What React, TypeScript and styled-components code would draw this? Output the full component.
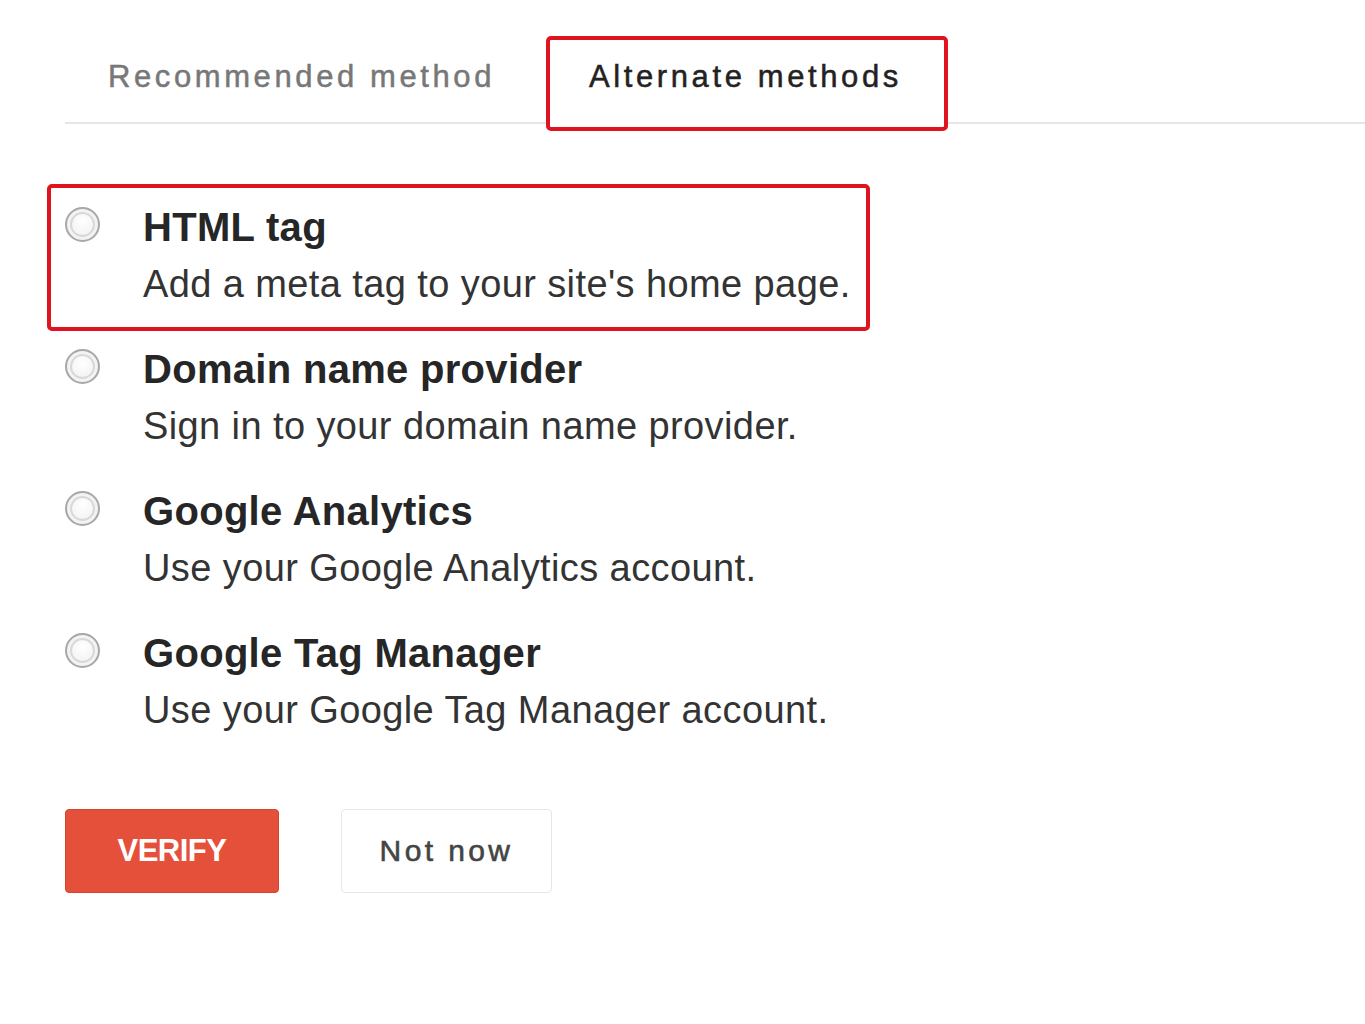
import React, { useState } from "react";
import styled, { createGlobalStyle } from "styled-components";

const GlobalStyle = createGlobalStyle`
  body {
    margin: 0;
    background: #fff;
    font-family: "Liberation Sans", Arial, sans-serif;
  }
`;

const annotationRed = "#e0141e";

const Page = styled.div`
  padding-top: 36px;
  width: 1365px;
  min-height: 1024px;
  box-sizing: border-box;
`;

const TabBar = styled.div`
  display: flex;
  align-items: flex-start;
  gap: 5px;
  height: 86px;
  margin-left: 65px;
  border-bottom: 2px solid #e6e6e6;
`;

const Tab = styled.div<{ active?: boolean; marked?: boolean }>`
  box-sizing: border-box;
  height: 95px;
  padding: 19px 42px 0 39px;
  border: 4px solid ${(p) => (p.marked ? annotationRed : "transparent")};
  border-radius: 5px;
  background: ${(p) => (p.active ? "#fff" : "transparent")};
  font-size: 31px;
  line-height: 36px;
  letter-spacing: 3.6px;
  color: ${(p) => (p.active ? "#222" : "#777")};
  -webkit-text-stroke: 0.5px ${(p) => (p.active ? "#222" : "#777")};
  white-space: nowrap;
  cursor: pointer;
`;

const OptionList = styled.div`
  margin: 60px 0 0 47px;
  width: 823px;
`;

const Option = styled.label<{ marked?: boolean }>`
  box-sizing: border-box;
  display: grid;
  grid-template-columns: 35px 1fr;
  column-gap: 43px;
  height: 147px;
  padding: 16px 14px 0;
  border: 4px solid ${(p) => (p.marked ? annotationRed : "transparent")};
  border-radius: 5px;
  cursor: pointer;

  & + & {
    margin-top: -5px;
  }
`;

const Radio = styled.span<{ checked?: boolean }>`
  box-sizing: border-box;
  width: 35px;
  height: 35px;
  margin-top: 3px;
  border-radius: 50%;
  border: 2px solid #a8a8a8;
  background: radial-gradient(circle at 50% 40%, #ffffff 0%, #f4f4f4 55%, #e2e2e2 100%);
  box-shadow: inset 0 0 0 3px #f3f3f3, inset 0 0 0 5px #d8d8d8;
  position: relative;

  &::after {
    content: "";
    display: ${(p) => (p.checked ? "block" : "none")};
    position: absolute;
    inset: 9px;
    border-radius: 50%;
    background: #333;
  }
`;

const OptionText = styled.div`
  display: flex;
  flex-direction: column;
  gap: 11px;
`;

const OptionTitle = styled.div`
  font-size: 40px;
  line-height: 46px;
  font-weight: bold;
  letter-spacing: 0.3px;
  color: #262626;
  white-space: nowrap;
`;

const OptionDesc = styled.div`
  font-size: 38px;
  line-height: 46px;
  letter-spacing: 0.4px;
  color: #333;
  white-space: nowrap;
`;

const ButtonRow = styled.div`
  display: flex;
  gap: 62px;
  margin: 52px 0 0 65px;
`;

const Button = styled.button<{ primary?: boolean }>`
  box-sizing: border-box;
  height: 84px;
  width: ${(p) => (p.primary ? "214px" : "211px")};
  border-radius: 4px;
  border: 1px solid ${(p) => (p.primary ? "#d8442f" : "#e6e6e6")};
  background: ${(p) => (p.primary ? "#e5503b" : "#fff")};
  color: ${(p) => (p.primary ? "#fff" : "#444")};
  font-family: "Liberation Sans", Arial, sans-serif;
  font-size: ${(p) => (p.primary ? "31px" : "30px")};
  font-weight: ${(p) => (p.primary ? "bold" : "normal")};
  letter-spacing: ${(p) => (p.primary ? "-0.5px" : "3.4px")};
  -webkit-text-stroke: ${(p) => (p.primary ? "0" : "0.6px #444")};
  padding: 0;
  cursor: pointer;
`;

const methods = [
  { id: "html", title: "HTML tag", desc: "Add a meta tag to your site's home page." },
  { id: "dns", title: "Domain name provider", desc: "Sign in to your domain name provider." },
  { id: "ga", title: "Google Analytics", desc: "Use your Google Analytics account." },
  { id: "gtm", title: "Google Tag Manager", desc: "Use your Google Tag Manager account." }
];

const App: React.FC = () => {
  const [tab, setTab] = useState("alternate");
  const [selected, setSelected] = useState<string | null>(null);

  return (
    <Page>
      <GlobalStyle />
      <TabBar>
        <Tab active={tab === "recommended"} onClick={() => setTab("recommended")}>
          Recommended method
        </Tab>
        <Tab active={tab === "alternate"} marked onClick={() => setTab("alternate")}>
          Alternate methods
        </Tab>
      </TabBar>

      <OptionList>
        {methods.map((m) => (
          <Option key={m.id} marked={m.id === "html"} onClick={() => setSelected(m.id)}>
            <Radio checked={selected === m.id} />
            <OptionText>
              <OptionTitle>{m.title}</OptionTitle>
              <OptionDesc>{m.desc}</OptionDesc>
            </OptionText>
          </Option>
        ))}
      </OptionList>

      <ButtonRow>
        <Button primary>VERIFY</Button>
        <Button>Not now</Button>
      </ButtonRow>
    </Page>
  );
};

export default App;
